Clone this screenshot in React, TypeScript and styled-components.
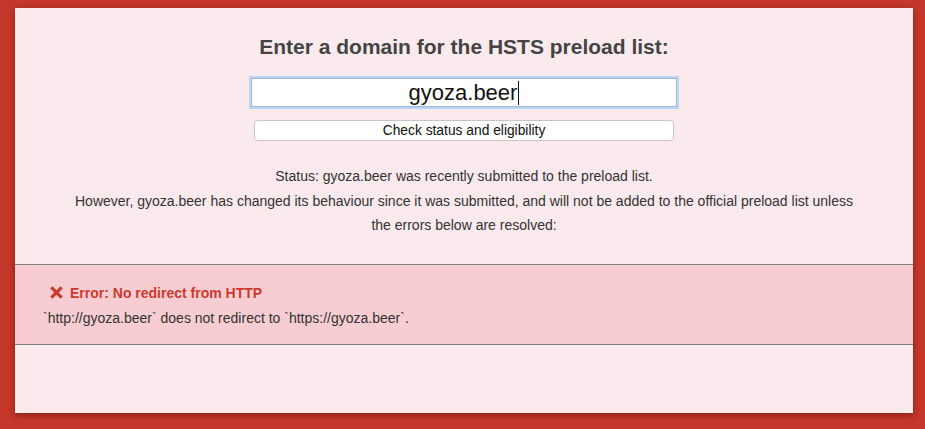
import React from "react";
import styled, { createGlobalStyle } from "styled-components";

const GlobalStyle = createGlobalStyle`
  html, body {
    margin: 0;
    padding: 0;
    background: #c5372a;
    font-family: "Liberation Sans", Arial, Helvetica, sans-serif;
  }
`;

const Page = styled.div`
  padding: 8px 12px 16px 15px;
`;

const Panel = styled.main`
  background: #fbeaed;
  height: 405px;
  box-shadow: 0 2px 6px rgba(80, 10, 5, 0.55);
  display: flex;
  flex-direction: column;
`;

const Form = styled.form`
  display: flex;
  flex-direction: column;
  align-items: center;
  padding-top: 27px;
`;

const Title = styled.h1`
  margin: 0;
  font-size: 21px;
  line-height: 24px;
  font-weight: bold;
  color: #444;
`;

const Field = styled.div`
  margin-top: 19px;
  width: 424px;
  height: 27px;
  background: #fff;
  border: 1px solid #9fb9d6;
  box-shadow: 0 0 0 2px #bcd5f2;
  display: flex;
  justify-content: center;
  align-items: center;
  font-size: 22px;
  color: #111;
`;

const Caret = styled.span`
  display: inline-block;
  width: 1px;
  height: 24px;
  background: #111;
  margin-left: 1px;
`;

const Submit = styled.button`
  margin-top: 13px;
  width: 420px;
  height: 21px;
  padding: 0;
  background: #fff;
  border: 1px solid #c9c3c3;
  border-radius: 4px;
  font-family: "Liberation Sans", Arial, sans-serif;
  font-size: 13.8px;
  color: #111;
`;

const Status = styled.div`
  margin: 23px auto 0;
  width: 800px;
  text-align: center;
  font-size: 14px;
  line-height: 24.5px;
  color: #333;
`;

const ErrorBand = styled.section`
  margin-top: 26px;
  background: #f7cdd2;
  border-top: 1px solid #808080;
  border-bottom: 1px solid #808080;
  padding: 18px 28px 17px;
`;

const ErrorTitle = styled.div`
  display: flex;
  align-items: center;
  gap: 6px;
  padding-left: 6px;
  font-size: 14px;
  line-height: 20px;
  font-weight: bold;
  color: #cc3a2e;
`;

const ErrorText = styled.div`
  margin-top: 6px;
  font-size: 14px;
  line-height: 18px;
  color: #333;
`;

const CrossIcon = () => (
  <svg width="15" height="15" viewBox="0 0 16 16">
    <path d="M2.5 2.5 L13.5 13.5 M13.5 2.5 L2.5 13.5" stroke="#cc3a2e" strokeWidth="3.4" strokeLinecap="butt" />
  </svg>
);

export default function App() {
  const domain = "gyoza.beer";
  return (
    <>
      <GlobalStyle />
      <Page>
        <Panel>
          <Form onSubmit={(e) => e.preventDefault()}>
            <Title>Enter a domain for the HSTS preload list:</Title>
            <Field role="textbox">
              {domain}
              <Caret />
            </Field>
            <Submit type="submit">Check status and eligibility</Submit>
          </Form>
          <Status>
            Status: {domain} was recently submitted to the preload list.
            <br />
            However, {domain} has changed its behaviour since it was submitted, and will not be added to the
            official preload list unless the errors below are resolved:
          </Status>
          <ErrorBand>
            <ErrorTitle>
              <CrossIcon />
              Error: No redirect from HTTP
            </ErrorTitle>
            <ErrorText>
              `http://{domain}` does not redirect to `https://{domain}`.
            </ErrorText>
          </ErrorBand>
        </Panel>
      </Page>
    </>
  );
}
